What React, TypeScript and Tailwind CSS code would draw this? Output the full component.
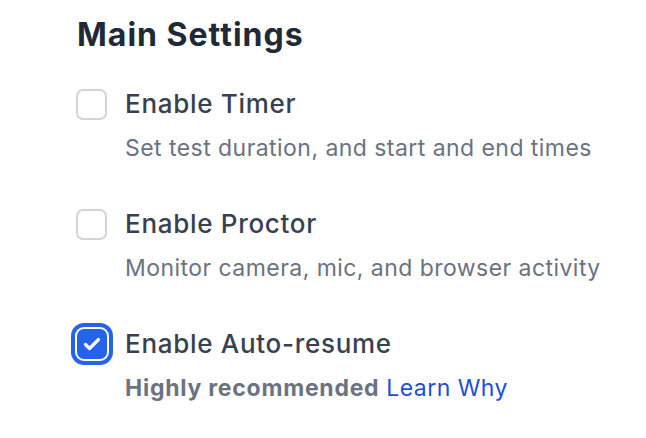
import React from "react";

type Option = {
  label: string;
  description: React.ReactNode;
  checked: boolean;
};

function Checkbox({ checked }: { checked: boolean }) {
  if (checked) {
    return (
      <span className="flex h-[30px] w-[30px] shrink-0 items-center justify-center rounded-[7px] bg-[#2563eb] ring-4 ring-[#2563eb] ring-offset-2 ring-offset-white">
        <svg width="30" height="30" viewBox="0 0 30 30" fill="none">
          <path
            d="M8.5 15.5l4 4L21.5 10.5"
            stroke="white"
            strokeWidth="3.2"
            strokeLinecap="round"
            strokeLinejoin="round"
          />
        </svg>
      </span>
    );
  }
  return (
    <span className="-ml-[1px] block h-[31px] w-[31px] shrink-0 rounded-[7px] border-2 border-[#d1d5db] bg-white" />
  );
}

export default function App() {
  const options: Option[] = [
    {
      label: "Enable Timer",
      description: "Set test duration, and start and end times",
      checked: false,
    },
    {
      label: "Enable Proctor",
      description: "Monitor camera, mic, and browser activity",
      checked: false,
    },
    {
      label: "Enable Auto-resume",
      description: (
        <>
          <span className="font-bold tracking-[0.75px] text-[#6b7280]">Highly recommended</span>{" "}
          <span className="text-[#1d4ed8]">Learn Why</span>
        </>
      ),
      checked: true,
    },
  ];

  return (
    <div
      className="min-h-screen w-full bg-white pl-[77px] pt-[17px]"
      style={{ fontFamily: "Inter, 'Noto Sans', sans-serif" }}
    >
      <h1 className="text-[32px] font-bold leading-[36px] tracking-[1px] text-[#1f2937]">
        Main Settings
      </h1>
      <div className="mt-[35px] flex flex-col gap-[44px]">
        {options.map((o) => (
          <div key={o.label} className="flex flex-col">
            <div className="flex items-center">
              <span className="flex w-[48px] shrink-0 items-center">
                <Checkbox checked={o.checked} />
              </span>
              <span className="text-[26px] font-medium leading-[32px] tracking-[0.7px] text-[#374151]">
                {o.label}
              </span>
            </div>
            <div className="mt-3 pl-[48px] text-[23px] leading-[32px] tracking-[0.45px] text-[#6b7280]">
              {o.description}
            </div>
          </div>
        ))}
      </div>
    </div>
  );
}
